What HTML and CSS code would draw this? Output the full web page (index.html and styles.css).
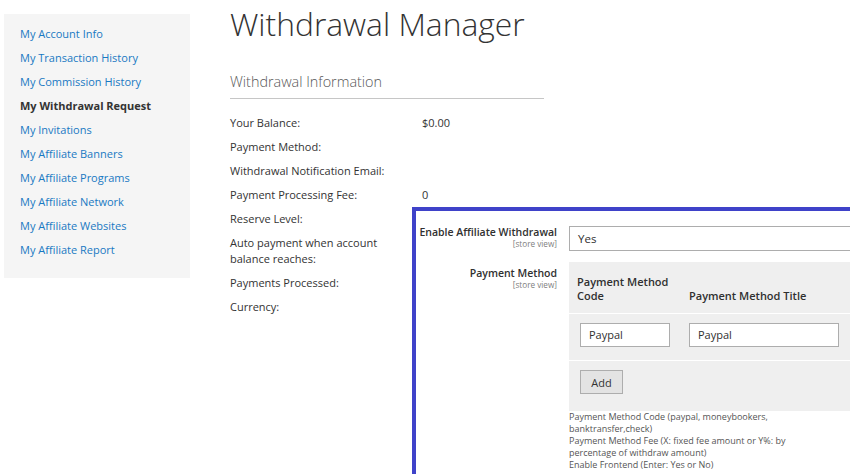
FILE: index.html
```html
<!DOCTYPE html>
<html>
<head>
<meta charset="utf-8">
<link rel="stylesheet" href="styles.css">
</head>
<body>
<div class="page">
  <nav class="sidebar">
    <a class="nav-link" href="#">My Account Info</a>
    <a class="nav-link" href="#">My Transaction History</a>
    <a class="nav-link" href="#">My Commission History</a>
    <span class="nav-link current">My Withdrawal Request</span>
    <a class="nav-link" href="#">My Invitations</a>
    <a class="nav-link" href="#">My Affiliate Banners</a>
    <a class="nav-link" href="#">My Affiliate Programs</a>
    <a class="nav-link" href="#">My Affiliate Network</a>
    <a class="nav-link" href="#">My Affiliate Websites</a>
    <a class="nav-link" href="#">My Affiliate Report</a>
  </nav>
  <main class="main">
    <h1 class="title">Withdrawal Manager</h1>
    <h2 class="section-title">Withdrawal Information</h2>
    <dl class="info">
      <dt>Your Balance:</dt><dd>$0.00</dd>
      <dt>Payment Method:</dt><dd></dd>
      <dt>Withdrawal Notification Email:</dt><dd></dd>
      <dt>Payment Processing Fee:</dt><dd>0</dd>
      <dt>Reserve Level:</dt><dd></dd>
      <dt class="wrap">Auto payment when account balance reaches:</dt><dd></dd>
      <dt>Payments Processed:</dt><dd></dd>
      <dt>Currency:</dt><dd></dd>
    </dl>
  </main>
</div>

<section class="config">
  <div class="cfg-row">
    <div class="cfg-label">Enable Affiliate Withdrawal<span class="scope">[store view]</span></div>
    <div class="cfg-value">
      <div class="select">Yes</div>
    </div>
  </div>
  <div class="cfg-row">
    <div class="cfg-label grid-label">Payment Method<span class="scope">[store view]</span></div>
    <div class="cfg-value">
      <div class="grid">
        <div class="grid-head">
          <div class="col-code">Payment Method Code</div>
          <div class="col-title">Payment Method Title</div>
        </div>
        <div class="grid-row">
          <div class="col-code"><div class="input small">Paypal</div></div>
          <div class="col-title"><div class="input wide">Paypal</div></div>
        </div>
        <div class="grid-foot">
          <button class="btn" type="button">Add</button>
        </div>
      </div>
      <p class="note">Payment Method Code (paypal, moneybookers, banktransfer,check)<br>Payment Method Fee (X: fixed fee amount or Y%: by percentage of withdraw amount)<br>Enable Frontend (Enter: Yes or No)</p>
    </div>
  </div>
</section>
</body>
</html>
```
FILE: styles.css
```css
html, body {
  margin: 0;
  padding: 0;
  background: #fff;
  font-family: "Open Sans", "Liberation Sans", sans-serif;
  color: #333;
  overflow: hidden;
}
body {
  width: 850px;
  height: 474px;
  position: relative;
}
.page {
  display: flex;
  align-items: flex-start;
  padding: 14px 0 0 4px;
  gap: 40px;
}
.sidebar {
  width: 186px;
  height: 264px;
  box-sizing: border-box;
  background: #f5f5f5;
  padding: 8px 0 0 16px;
  display: flex;
  flex-direction: column;
}
.nav-link {
  font-size: 11px;
  line-height: 24px;
  color: #1979c3;
  text-decoration: none;
}
.nav-link.current {
  color: #333;
  font-weight: 700;
}
.main {
  width: 314px;
  margin-top: -14px;
}
.title {
  margin: 0;
  font-weight: 300;
  font-size: 31.8px;
  line-height: 48px;
  color: #333;
}
.section-title {
  margin: 23px 0 0;
  font-weight: 300;
  font-size: 14.4px;
  line-height: 22px;
  color: #575757;
  padding-bottom: 5px;
  border-bottom: 1px solid #c6c6c6;
}
.info {
  margin: 16px 0 0;
  display: grid;
  grid-template-columns: 192px 1fr;
  font-size: 11px;
  line-height: 16px;
  row-gap: 8px;
}
.info dt, .info dd {
  margin: 0;
}
.info dt.wrap {
  width: 160px;
}
.config {
  position: absolute;
  left: 412px;
  top: 207px;
  right: 0;
  bottom: 0;
  background: #fff;
  border-top: 4px solid #3f42c9;
  border-left: 4px solid #3f42c9;
  padding-top: 15px;
  box-sizing: border-box;
}
.cfg-row {
  display: flex;
  gap: 12px;
  margin-bottom: 11px;
}
.cfg-label {
  width: 141px;
  text-align: right;
  white-space: nowrap;
  font-size: 10.5px;
  font-weight: 600;
  line-height: 13px;
  color: #303030;
  padding-top: 0;
  display: flex;
  flex-direction: column;
  align-items: flex-end;
}
.cfg-label.grid-label {
  padding-top: 5px;
}
.scope {
  font-size: 8.2px;
  font-weight: 400;
  color: #808080;
  line-height: 10px;
}
.cfg-value {
  flex: 1;
}
.select {
  height: 25px;
  box-sizing: border-box;
  border: 1px solid #adadad;
  border-right: none;
  font-size: 11.5px;
  line-height: 23px;
  padding-left: 8px;
  color: #303030;
}
.grid {
  background: #efefef;
}
.grid-head {
  display: flex;
  height: 52px;
  box-sizing: border-box;
  padding: 0 0 10px 8px;
  font-size: 11px;
  font-weight: 600;
  line-height: 14px;
  color: #303030;
  align-items: flex-end;
  border-bottom: 1px solid #fff;
}
.grid-head .col-code {
  width: 112px;
}
.grid-row {
  display: flex;
  height: 47px;
  box-sizing: border-box;
  padding: 9px 0 0 11px;
  border-bottom: 1px solid #fff;
}
.grid-row .col-code {
  width: 109px;
}
.input {
  height: 24px;
  box-sizing: border-box;
  border: 1px solid #adadad;
  background: #fff;
  font-size: 11px;
  line-height: 22px;
  padding-left: 8px;
  color: #303030;
}
.input.small { width: 90px; }
.input.wide { width: 150px; }
.grid-foot {
  height: 50px;
  box-sizing: border-box;
  padding: 9px 0 0 11px;
}
.btn {
  display: block;
  width: 43px;
  height: 24px;
  border: 1px solid #adadad;
  background: #e3e3e3;
  font-family: "Open Sans", "Liberation Sans", sans-serif;
  font-size: 11px;
  color: #333;
  padding: 0;
}
.note {
  margin: 0;
  font-size: 9px;
  line-height: 12px;
  color: #555;
  width: 240px;
}
```
